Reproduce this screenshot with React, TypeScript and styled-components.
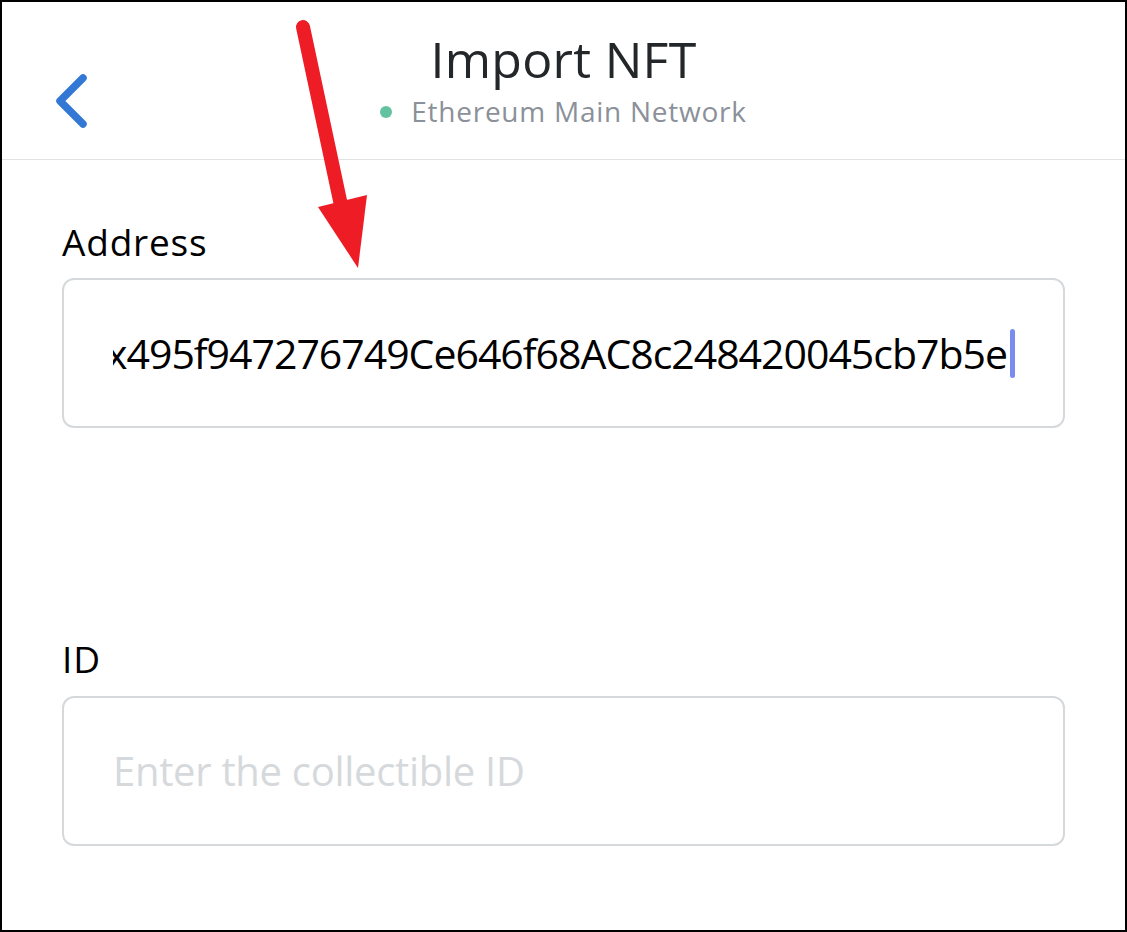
import React from "react";
import styled, { createGlobalStyle } from "styled-components";

const Global = createGlobalStyle`
  html, body { margin: 0; padding: 0; background: #ffffff; }
  body { font-family: "Open Sans", "Lato", sans-serif; }
  * { box-sizing: border-box; }
`;

const Frame = styled.div`
  position: relative;
  width: 1127px;
  height: 932px;
  border: 2px solid #000000;
  background: #ffffff;
  overflow: hidden;
  display: flex;
  flex-direction: column;
`;

const Header = styled.header`
  height: 158px;
  border-bottom: 1px solid #e1e2e4;
  display: grid;
  grid-template-columns: 1fr auto 1fr;
  align-items: start;
  padding-top: 27px;
`;

const BackButton = styled.button`
  justify-self: start;
  margin: 44px 0 0 50px;
  width: 42px;
  height: 56px;
  padding: 0;
  border: 0;
  background: transparent;
  display: flex;
  align-items: center;
  justify-content: center;
  cursor: pointer;
`;

const TitleBlock = styled.div`
  display: flex;
  flex-direction: column;
  align-items: center;
`;

const Title = styled.h1`
  margin: 0;
  font-size: 50px;
  line-height: 1.2;
  font-weight: 400;
  letter-spacing: 0.3px;
  color: #24272a;
`;

const Network = styled.div`
  margin-top: 6px;
  display: flex;
  align-items: center;
  gap: 19px;
  font-size: 28px;
  line-height: 1.2;
  letter-spacing: 0.75px;
  color: #8b9099;
`;

const Dot = styled.span`
  width: 12px;
  height: 12px;
  border-radius: 50%;
  background: #64c2a0;
  flex-shrink: 0;
`;

const Body = styled.main`
  padding: 60px 60px 0 60px;
  display: flex;
  flex-direction: column;
`;

const Field = styled.div<{ $gap?: number }>`
  display: flex;
  flex-direction: column;
  margin-top: ${(p) => p.$gap ?? 0}px;
`;

const Label = styled.label`
  font-size: 37px;
  line-height: 1.2;
  letter-spacing: 0.8px;
  color: #000000;
  margin-bottom: 14px;
`;

const InputBox = styled.div`
  height: 150px;
  border: 2px solid #d6d9dc;
  border-radius: 12px;
  padding: 0 48px 0 49px;
  display: flex;
  align-items: center;
`;

const Viewport = styled.div`
  flex: 1;
  overflow: hidden;
  display: flex;
  justify-content: flex-end;
  align-items: center;
  height: 60px;
`;

const ValueText = styled.span`
  flex-shrink: 0;
  white-space: nowrap;
  font-size: 41px;
  letter-spacing: -1px;
  color: #000000;
`;

const Caret = styled.span`
  flex-shrink: 0;
  width: 5px;
  height: 49px;
  border-radius: 3px;
  background: #7b8cf0;
  margin-left: 3px;
`;

const Placeholder = styled.span`
  font-size: 40px;
  letter-spacing: -0.3px;
  color: #d6d9dc;
  white-space: nowrap;
`;

const Annotation = styled.svg`
  position: absolute;
  top: -2px;
  left: -2px;
  width: 1127px;
  height: 932px;
  pointer-events: none;
`;

export default function App() {
  return (
    <>
      <Global />
      <Frame>
        <Header>
          <BackButton aria-label="Back">
            <svg width="42" height="56" viewBox="0 0 42 56">
              <polyline
                points="31,5 8,28 31,51"
                fill="none"
                stroke="#3478d6"
                strokeWidth="7.5"
                strokeLinecap="round"
                strokeLinejoin="round"
              />
            </svg>
          </BackButton>
          <TitleBlock>
            <Title>Import NFT</Title>
            <Network>
              <Dot />
              <span>Ethereum Main Network</span>
            </Network>
          </TitleBlock>
          <div />
        </Header>
        <Body>
          <Field>
            <Label>Address</Label>
            <InputBox>
              <Viewport>
                <ValueText>0x495f947276749Ce646f68AC8c248420045cb7b5e</ValueText>
                <Caret />
              </Viewport>
            </InputBox>
          </Field>
          <Field $gap={209}>
            <Label>ID</Label>
            <InputBox>
              <Placeholder>Enter the collectible ID</Placeholder>
            </InputBox>
          </Field>
        </Body>
        <Annotation viewBox="0 0 1127 932">
          <line
            x1="303"
            y1="27"
            x2="342"
            y2="210"
            stroke="#ee1c25"
            strokeWidth="14"
            strokeLinecap="round"
          />
          <polygon points="318,207 367,195 358,268" fill="#ee1c25" />
        </Annotation>
      </Frame>
    </>
  );
}
